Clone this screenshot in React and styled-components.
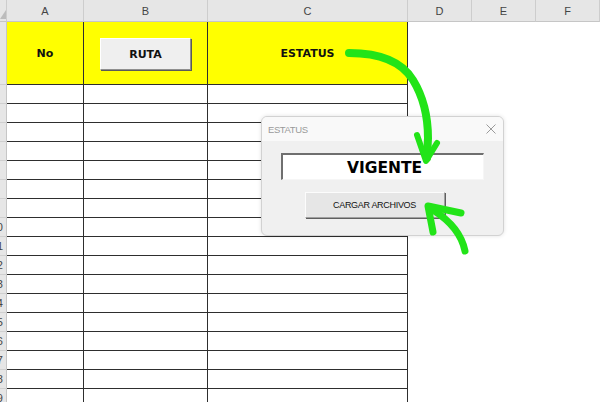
import styled, { createGlobalStyle } from "styled-components";

const GlobalStyle = createGlobalStyle`
    html, body {
        margin: 0;
        padding: 0;
        background: #ffffff;
        overflow: hidden;
    }
    * {
        box-sizing: border-box;
    }
`

const Page = styled.div`
    position: relative;
    width: 600px;
    height: 402px;
    overflow: hidden;
    font-family: "Liberation Sans", Arial, sans-serif;
    background: #ffffff;
`

const COLS = [7, 77, 124, 200, 64, 64, 64, 100]

const Row = styled.div`
    display: flex;
    height: ${p => p.$h}px;
`

const ColHead = styled.div`
    width: ${p => p.$w}px;
    flex-shrink: 0;
    height: 22px;
    background: #e6e6e6;
    border-right: 1px solid #cdcdcd;
    border-bottom: 1px solid #c6c6c6;
    display: flex;
    align-items: center;
    justify-content: center;
    font-size: 11px;
    color: #444444;
    padding-top: 1px;
`

const Corner = styled(ColHead)`
    position: relative;
    &::after {
        content: "";
        position: absolute;
        right: 0;
        bottom: 2px;
        border-style: solid;
        border-width: 0 0 9px 6px;
        border-color: transparent transparent #bcbcbc transparent;
    }
`

const RowHead = styled.div`
    width: 7px;
    flex-shrink: 0;
    background: #e6e6e6;
    border-right: 1px solid #c6c6c6;
    border-bottom: 1px solid #cfcfcf;
    display: flex;
    align-items: center;
    justify-content: flex-end;
    overflow: hidden;
    font-size: 11px;
    color: #444444;
    padding-right: 3px;
    white-space: nowrap;
`

const Cell = styled.div`
    width: ${p => p.$w}px;
    flex-shrink: 0;
    background: ${p => (p.$yellow ? "#ffff00" : "#ffffff")};
    border-right: ${p => (p.$grid ? "1px solid #2e2e2e" : "none")};
    border-bottom: ${p => (p.$grid ? "1px solid #2e2e2e" : "none")};
    display: flex;
    align-items: center;
    justify-content: ${p => p.$align || "center"};
`

const HeadLabel = styled.span`
    font-family: "DejaVu Sans", Verdana, sans-serif;
    font-weight: bold;
    font-size: 11px;
    color: #111111;
`

const SheetButton = styled.div`
    width: 91px;
    height: 32px;
    margin-left: 16px;
    margin-top: 2px;
    background: #efefef;
    border-top: 1px solid #ffffff;
    border-left: 1px solid #ffffff;
    border-right: 1px solid #8f8f8f;
    border-bottom: 1px solid #8f8f8f;
    box-shadow: 1px 1px 0 #5a5a5a;
    display: flex;
    align-items: center;
    justify-content: center;
`

const Dialog = styled.div`
    position: absolute;
    left: 261px;
    top: 116px;
    width: 243px;
    height: 120px;
    border: 1px solid #d2d2d2;
    border-radius: 6px;
    background: #f0f0f0;
    box-shadow: 0 0 4px rgba(0, 0, 0, 0.12);
    overflow: hidden;
    display: flex;
    flex-direction: column;
`

const TitleBar = styled.div`
    height: 24px;
    background: #f9f9f9;
    display: flex;
    align-items: center;
    justify-content: space-between;
    padding: 0 7px 0 6px;
`

const Title = styled.span`
    font-size: 9.5px;
    color: #9a9a9a;
    letter-spacing: -0.4px;
`

const Body = styled.div`
    flex: 1;
    display: flex;
    flex-direction: column;
    align-items: center;
    padding-top: 12px;
    gap: 12px;
`

const StatusBox = styled.div`
    width: 203px;
    height: 27px;
    margin-left: -1px;
    background: #ffffff;
    border-top: 2px solid #6f6f6f;
    border-left: 2px solid #6f6f6f;
    border-right: 1px solid #f6f6f6;
    border-bottom: 1px solid #f6f6f6;
    display: flex;
    align-items: center;
    justify-content: center;
    font-family: "DejaVu Sans", Verdana, sans-serif;
    font-weight: bold;
    font-size: 15.5px;
    color: #000000;
    padding-top: 1px;
    padding-left: 4px;
`

const LoadButton = styled.div`
    width: 140px;
    height: 26px;
    margin-left: -16px;
    background: #e6e6e6;
    border-top: 1px solid #fcfcfc;
    border-left: 1px solid #fcfcfc;
    border-right: 1px solid #a0a0a0;
    border-bottom: 1px solid #a0a0a0;
    box-shadow: 1px 1px 0 #5f5f5f;
    display: flex;
    align-items: center;
    justify-content: center;
    font-size: 9px;
    letter-spacing: -0.3px;
    color: #111111;
`

const Overlay = styled.svg`
    position: absolute;
    left: 0;
    top: 0;
    pointer-events: none;
`

const CloseIcon = () => (
    <svg width="10" height="10" viewBox="0 0 10 10">
        <path d="M0.5 0.5 L9.5 9.5 M9.5 0.5 L0.5 9.5" stroke="#9a9a9a" strokeWidth="1" />
    </svg>
)

const GREEN = "#22e418"

const Arrows = () => (
    <Overlay width="600" height="402" viewBox="0 0 600 402">
        <g fill="none" stroke={GREEN} strokeLinecap="round" strokeLinejoin="round">
            <path d="M349 53 C380 53 402 62 413 80 C424 98 428 118 428 138 L427 158" strokeWidth="8" />
            <path d="M417 135 L426 161 L437 143" strokeWidth="6" />
            <path d="M465 251 C462 236 452 222 433 210" strokeWidth="7" />
            <path d="M461 213 L428 206 L433 232" strokeWidth="7" />
        </g>
    </Overlay>
)

const App = () => {
    const letters = ["", "A", "B", "C", "D", "E", "F", ""]
    const rows = Array.from({ length: 17 }, (_, i) => i + 3)

    return (
        <Page>
            <GlobalStyle />
            <Row $h={22}>
                {letters.map((l, i) =>
                    i === 0 ? <Corner key={i} $w={COLS[0]} /> : <ColHead key={i} $w={COLS[i]}>{l}</ColHead>
                )}
            </Row>
            <Row $h={63}>
                <RowHead />
                <Cell $w={COLS[1]} $grid $yellow><HeadLabel>No</HeadLabel></Cell>
                <Cell $w={COLS[2]} $grid $yellow $align="flex-start">
                    <SheetButton><HeadLabel>RUTA</HeadLabel></SheetButton>
                </Cell>
                <Cell $w={COLS[3]} $grid $yellow><HeadLabel>ESTATUS</HeadLabel></Cell>
                <Cell $w={COLS[4]} />
                <Cell $w={COLS[5]} />
                <Cell $w={COLS[6]} />
            </Row>
            {rows.map(n => (
                <Row key={n} $h={19}>
                    <RowHead>{n >= 10 ? n : ""}</RowHead>
                    <Cell $w={COLS[1]} $grid />
                    <Cell $w={COLS[2]} $grid />
                    <Cell $w={COLS[3]} $grid />
                    <Cell $w={COLS[4]} />
                </Row>
            ))}
            <Dialog>
                <TitleBar>
                    <Title>ESTATUS</Title>
                    <CloseIcon />
                </TitleBar>
                <Body>
                    <StatusBox>VIGENTE</StatusBox>
                    <LoadButton>CARGAR ARCHIVOS</LoadButton>
                </Body>
            </Dialog>
            <Arrows />
        </Page>
    )
}

export default App
